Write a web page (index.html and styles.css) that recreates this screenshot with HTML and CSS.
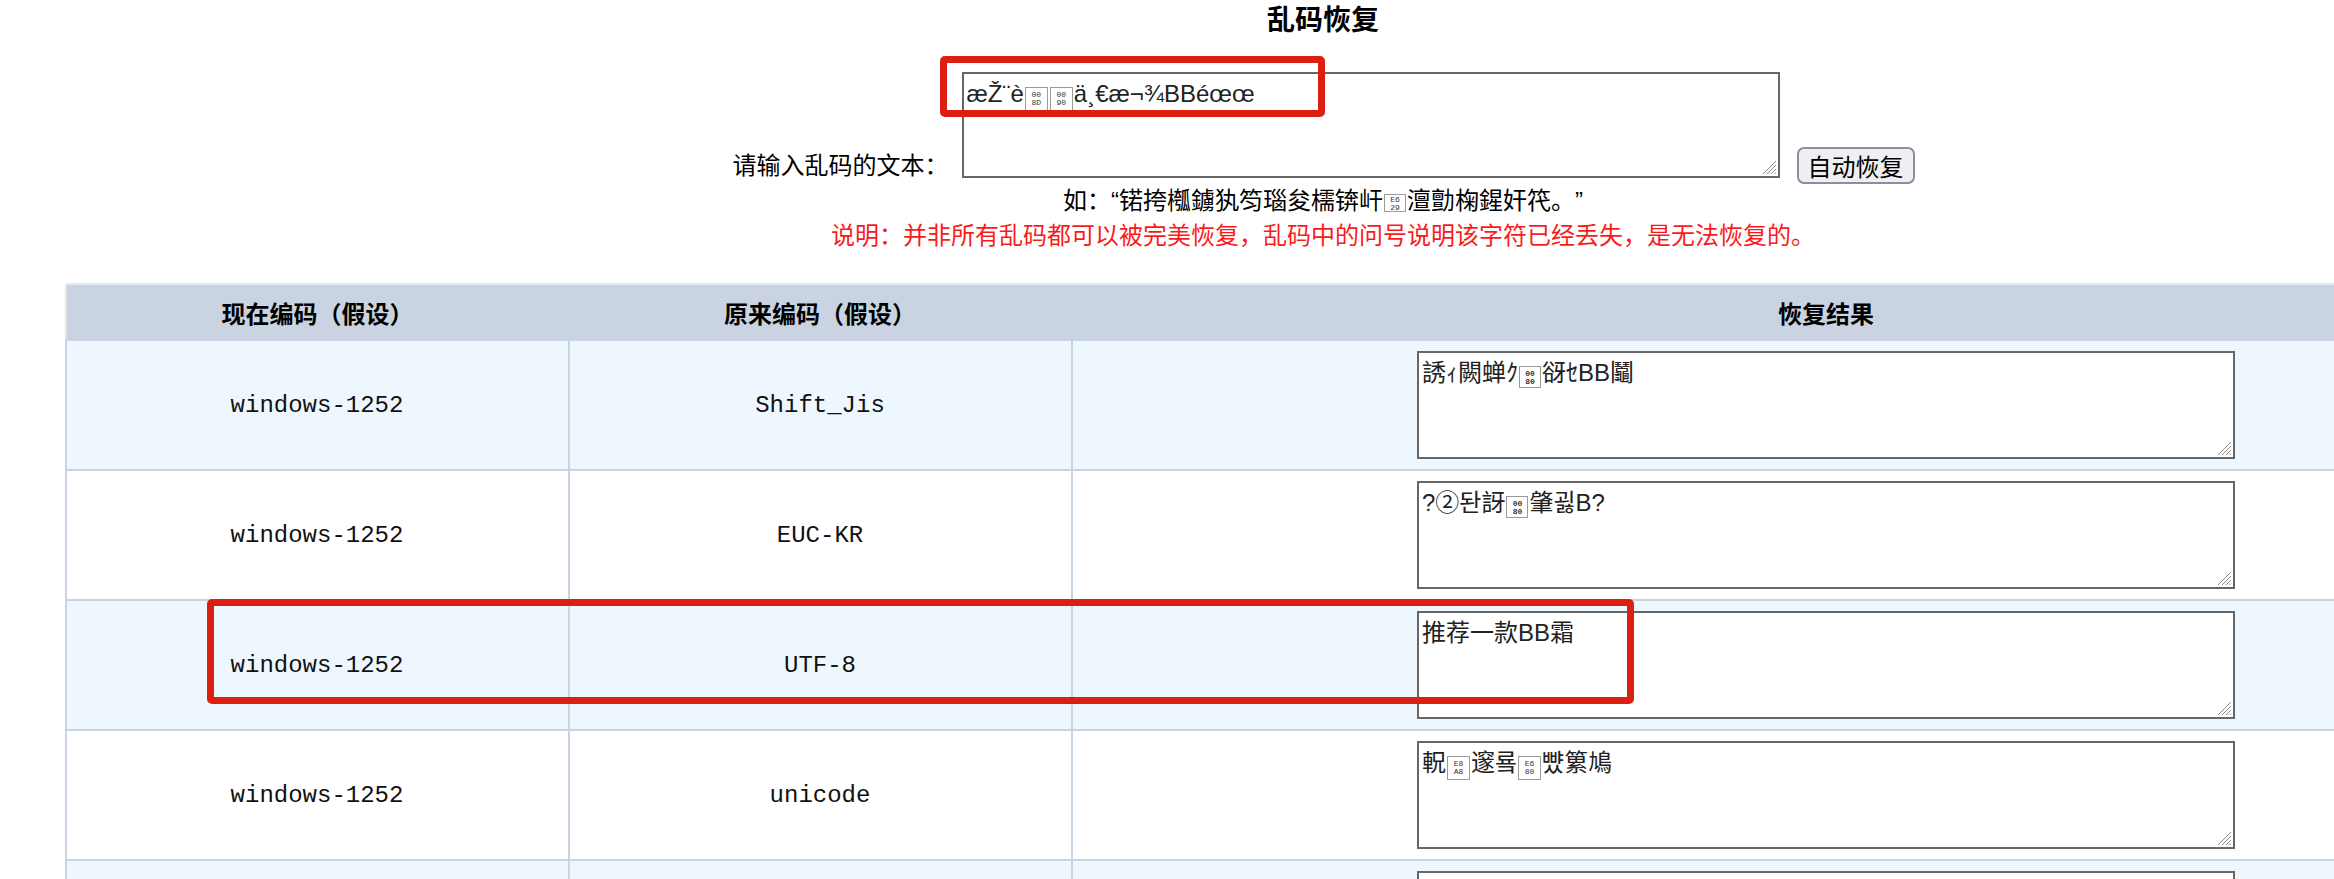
FILE: index.html
```html
<!DOCTYPE html>
<html lang="zh-CN">
<head>
<meta charset="utf-8">
<title>乱码恢复</title>
<link rel="stylesheet" href="styles.css">
</head>
<body>
<div class="page">
  <h1 class="title">乱码恢复</h1>
  <div class="input-row">
    <label class="input-label">请输入乱码的文本：</label>
    <div class="ta ta-input">æŽ¨è<span class="hex">00<br>8D</span><span class="hex">00<br>90</span>ä¸€æ¬¾BBéœœ<svg class="grip" viewBox="0 0 16 16"><path d="M15 2L2 15M15 6L6 15M15 10L10 15M15 13.5L13.5 15"/></svg></div>
    <button class="btn" type="button">自动恢复</button>
  </div>
  <p class="example">如：“锘挎槬鐪犱笉瑙夋檽锛屽<span class="hex hex-line">E6<br>29</span>澶勯椈鍟奸笩。”</p>
  <p class="note">说明：并非所有乱码都可以被完美恢复，乱码中的问号说明该字符已经丢失，是无法恢复的。</p>

  <table class="result">
    <colgroup><col class="c1"><col class="c2"><col class="c3"></colgroup>
    <thead>
      <tr><th>现在编码（假设）</th><th>原来编码（假设）</th><th>恢复结果</th></tr>
    </thead>
    <tbody>
      <tr>
        <td>windows-1252</td><td>Shift_Jis</td>
        <td><div class="ta ta-cell">誘ｨ闕蝉ｸ<span class="hex hex-bold">00<br>80</span>谺ｾBB鬮<svg class="grip" viewBox="0 0 16 16"><path d="M15 2L2 15M15 6L6 15M15 10L10 15M15 13.5L13.5 15"/></svg></div></td>
      </tr>
      <tr>
        <td>windows-1252</td><td>EUC-KR</td>
        <td><div class="ta ta-cell">?②돤訝<span class="hex hex-bold">00<br>80</span>肇굃B?<svg class="grip" viewBox="0 0 16 16"><path d="M15 2L2 15M15 6L6 15M15 10L10 15M15 13.5L13.5 15"/></svg></div></td>
      </tr>
      <tr>
        <td>windows-1252</td><td>UTF-8</td>
        <td><div class="ta ta-cell">推荐一款BB霜<svg class="grip" viewBox="0 0 16 16"><path d="M15 2L2 15M15 6L6 15M15 10L10 15M15 13.5L13.5 15"/></svg></div></td>
      </tr>
      <tr>
        <td>windows-1252</td><td>unicode</td>
        <td><div class="ta ta-cell">軦<span class="hex">E8<br>A8</span>邃룤<span class="hex">E6<br>80</span>뺬䉂鳩<svg class="grip" viewBox="0 0 16 16"><path d="M15 2L2 15M15 6L6 15M15 10L10 15M15 13.5L13.5 15"/></svg></div></td>
      </tr>
      <tr>
        <td>windows-1252</td><td>GB2312</td>
        <td><div class="ta ta-cell">鎺ㄨ崘涓€娆綛B闇?<svg class="grip" viewBox="0 0 16 16"><path d="M15 2L2 15M15 6L6 15M15 10L10 15M15 13.5L13.5 15"/></svg></div></td>
      </tr>
    </tbody>
  </table>

  <div class="mark mark-input"></div>
  <div class="mark mark-row"></div>
</div>
</body>
</html>
```
FILE: styles.css
```css
html {
  overflow: hidden;
}

body {
  margin: 0;
  background: #fff;
  color: #000;
  font-family: "Liberation Sans", "Noto Sans CJK SC", sans-serif;
  font-size: 24px;
  text-spacing-trim: space-all;
}

.page {
  position: relative;
  width: 2646px;
}

.title {
  margin: 0;
  height: 41px;
  line-height: 41px;
  font-size: 28px;
  font-weight: bold;
  text-align: center;
}

.input-row {
  display: flex;
  justify-content: center;
  align-items: flex-end;
  margin-top: 31px;
}

.input-label {
  display: block;
  line-height: 24px;
  height: 24px;
  margin-right: 13px;
  margin-left: 1px;
}

.ta {
  position: relative;
  box-sizing: border-box;
  background: #fff;
  border: 2px solid #676767;
  text-align: left;
  font-family: "Liberation Sans", "Noto Sans CJK SC", sans-serif;
  font-size: 24px;
  line-height: 36px;
  padding: 2px 3px;
  color: #222;
  white-space: nowrap;
}

.ta-input {
  width: 818px;
  height: 106px;
}

.ta-cell {
  display: inline-block;
  vertical-align: middle;
  width: 818px;
  height: 108px;
}

.grip {
  position: absolute;
  right: 1px;
  bottom: 1px;
  width: 16px;
  height: 16px;
  fill: none;
  stroke: #8a8a8a;
  stroke-width: 1;
}

.hex {
  display: inline-block;
  box-sizing: border-box;
  width: 23px;
  height: 24px;
  margin: 0 1px;
  padding-top: 3px;
  border: 1px solid #9b9b9b;
  vertical-align: -3px;
  font-family: "Liberation Mono", monospace;
  font-size: 8px;
  line-height: 8px;
  text-align: center;
  color: #333;
}

.hex-bold {
  font-weight: bold;
  height: 22px;
  width: 22px;
}

.hex-line {
  height: 18px;
  width: 22px;
  padding-top: 1px;
  vertical-align: -1px;
}

.btn {
  box-sizing: border-box;
  width: 118px;
  height: 37px;
  margin-left: 17px;
  margin-bottom: -6px;
  padding: 0;
  border: 2px solid #8e8d9f;
  border-radius: 7px;
  background: #efeff2;
  color: #000;
  font-family: "Noto Sans CJK SC", sans-serif;
  font-size: 24px;
  line-height: 33px;
}

.example {
  margin: 5px 0 0;
  line-height: 35px;
  text-align: center;
}

.note {
  margin: 0;
  line-height: 35px;
  text-align: center;
  color: #fb1a1a;
}

.result {
  width: 2517px;
  margin: 30px auto 0;
  border-collapse: collapse;
  table-layout: fixed;
  border-left: 2px solid #dde4ed;
}

.c1, .c2 {
  width: 20%;
}

.c3 {
  width: 60%;
}

.result th {
  height: 54px;
  padding: 0;
  background: #c9d3e1;
  border-top: 2px solid #e7ecf3;
  font-family: "Noto Sans CJK SC", sans-serif;
  font-size: 24px;
  font-weight: bold;
  text-align: center;
}

.result td {
  height: 128px;
  padding: 0;
  border: 2px solid #c9d4e3;
  text-align: center;
  vertical-align: middle;
  font-family: "Liberation Mono", monospace;
  font-size: 24px;
  color: #111;
}

.result tbody tr:nth-child(odd) td {
  background: #eff7fe;
}

.result tbody tr:nth-child(even) td {
  background: #fff;
}

.mark {
  position: absolute;
  box-sizing: border-box;
  border: 7px solid #db1f10;
  border-radius: 5px;
}

.mark-input {
  left: 940px;
  top: 56px;
  width: 385px;
  height: 61px;
}

.mark-row {
  left: 207px;
  top: 599px;
  width: 1427px;
  height: 105px;
}
```
